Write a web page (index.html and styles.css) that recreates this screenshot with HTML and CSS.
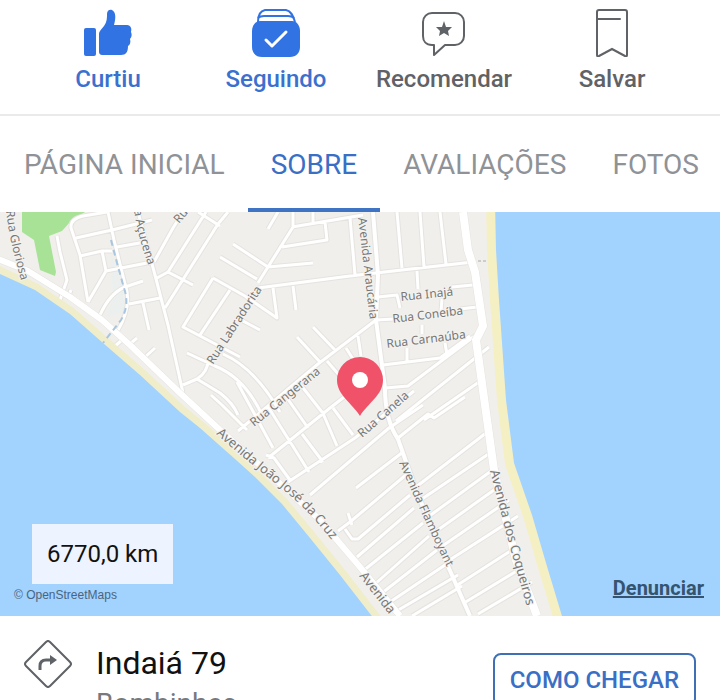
FILE: index.html
```html
<!DOCTYPE html>
<html lang="pt-BR">
<head>
  <meta charset="utf-8">
  <meta name="viewport" content="width=device-width, initial-scale=1">
  <title>Sobre</title>
  <link rel="stylesheet" href="styles.css">
</head>
<body>
  <!-- Page actions -->
  <div class="actions">
    <button type="button" class="action active">
      <svg class="action-icon" viewBox="0 0 48 48">
        <rect x="0" y="19" width="12" height="28" rx="2" fill="currentColor"/>
        <path d="M15 25 C15 22 18 20 20 17 C23 13 23 9 23 5 C23 1 26 0 28 1 C32 3 32 9 30 16 H43 C47 16 48 20 47 23 C48 25 48 28 46 30 C47 33 46 36 44 37 C44 43 42 46 37 46 H19 C16 46 15 45 15 42 Z" fill="currentColor"/>
      </svg>
      Curtiu
    </button>
    <button type="button" class="action active">
      <svg class="action-icon" viewBox="0 0 48 48">
        <path d="M6 13 C6 6 8 2 13 1 H34 C39 2 41 6 43 13" fill="none" stroke="currentColor" stroke-width="2"/>
        <path d="M6 9 C8 7 10 7 12 7 H36 C39 7 40 7 42 9" fill="none" stroke="currentColor" stroke-width="2"/>
        <path d="M8 12 H40 C45 12 48 17 48 22 V38 C48 44 44 48 38 48 H10 C4 48 0 44 0 38 V22 C0 17 3 12 8 12 Z" fill="currentColor"/>
        <path d="M14 31 L20 37 L34 23" fill="none" stroke="#fff" stroke-width="3" stroke-linecap="round" stroke-linejoin="round"/>
      </svg>
      Seguindo
    </button>
    <button type="button" class="action">
      <svg class="action-icon" viewBox="0 0 48 48">
        <path d="M12 4 H35 C40 4 44 8 44 13 V27 C44 32 40 36 35 36 H25 L14 46 V36 H12 C6 36 3 32 3 27 V13 C3 8 7 4 12 4 Z" fill="none" stroke="currentColor" stroke-width="2" stroke-linejoin="round"/>
        <path d="M24 12 L26 18 L32 18 L28 22 L29 27 L24 24 L19 27 L20 22 L16 18 L22 18 Z" fill="currentColor"/>
      </svg>
      Recomendar
    </button>
    <button type="button" class="action">
      <svg class="action-icon" viewBox="0 0 48 48">
        <path d="M11 1 H37 Q39 1 39 3 V46 Q39 48 37 47 L24 40 L11 47 Q9 48 9 46 V3 Q9 1 11 1 Z M9 10 H32" fill="none" stroke="currentColor" stroke-width="2" stroke-linecap="round"/>
      </svg>
      Salvar
    </button>
  </div>

  <!-- Tabs -->
  <nav class="tabs">
    <a href="#inicio" class="tab">PÁGINA INICIAL</a>
    <a href="#sobre" class="tab current">SOBRE</a>
    <a href="#avaliacoes" class="tab">AVALIAÇÕES</a>
    <a href="#fotos" class="tab">FOTOS</a>
  </nav>

  <!-- Map -->
  <div class="map">
    <svg class="map-canvas" viewBox="0 212 720 404">
      <defs>
        <path id="streets" d="M107 212 L83 216 Q70 219 71 228 L80 255 L88 302
          M76 238 L112 230 L152 220 M80 256 L102 251 L112 251 M117 247 L145 242
          M88 302 L106 271 L152 262 M102 251 L106 271
          M100 315 Q110 293 125 287 L143 281
          M57 236 L60 252 L67 280 L60 300 M71 290 L68 298
          M108 212 L114 240 L125 284 Q133 305 117 332
          M129 304 L160 298 M143 303 L149 330
          M138 212 L155 275 L168 325 L183 393
          M154 262 L173 228 L183 212 M157 278 L168 272 L193 285
          M168 272 L206 212 M165 308 L218 224 L228 212 M198 212 L220 226
          M213 278 L183 327 L240 357 M200 335 L230 290 M213 278 L245 296 L277 318 L273 288
          M183 385 L197 379 Q208 372 208 360 M187 353 L215 366 Q245 378 262 415
          M197 379 L220 393 Q233 403 238 415
          M114 347 L122 340 M131 343 L137 338 M144 358 L155 348
          M223 354 Q255 368 280 412
          M293 212 V227 L258 283 M292 227 L363 215 M313 212 V222 M268 229 L278 212
          M282 247 L327 240 L325 222 M233 244 L268 267 L313 263 M220 257 L257 279
          M258 288 L350 276 L402 270 L473 262 M293 286 L296 310 M243 321 L260 330
          M350 218 L355 275 M397 212 L402 268 M420 212 L424 267 M440 212 L446 264
          M417 271 L418 289 M378 297 L397 295 L400 308 M452 287 L473 285
          M376 320 L394 319 M460 309 L477 307 M442 299 L441 311
          M376 320 L318 364 L238 431 M297 337 L320 362 M313 327 L335 350
          M358 336 L361 356 M346 348 L360 370 M327 361 L345 382
          M383 365 L440 358 L470 336 M407 348 L407 361 M422 325 L422 334 M445 343 L447 355
          M385 388 L408 386 L476 335 M396 421 L489 347 M424 420 L479 382
          M268 458 L330 408 L370 377 M288 482 L355 438 L414 391 M310 495 L389 428 L423 405
          M211 395 L222 405 L247 430 M237 382 L273 448 M267 405 L309 472
          M300 384 L322 412 M302 434 L323 462 M322 411 L337 446 M333 408 L353 435
          M285 395 L308 428 M266 455 L274 458 L290 480
          M398 438 L428 414 L434 418 L465 397 M403 452 L356 488
          M338 531 L350 522 L407 474 M348 513 L352 525 M345 529 L352 539 L358 539 L410 495
          M357 557 L414 508 M363 571 L423 523 M375 584 L429 536 M382 593 L437 550
          M390 602 L448 563 M395 612 L458 575 M412 616 L462 586
          M416 487 L486 433 M422 499 L490 453 M428 517 L498 466 M435 532 L501 485
          M441 547 L509 500 M448 561 L518 516 M456 586 L512 550 M464 603 L520 569 M478 614 L532 582"/>
        <path id="avenues" d="M373 212 L378 275 L376 320 L385 388 Q385 420 398 439 L416 490 L440 548 L470 616"/>
        <path id="shore-avenue" d="M-2 259 L28 271 L70 297 L102 320 L130 345 L180 393 L220 430 L285 488 L320 520 L360 567 L400 616"/>
        <path id="beach-avenue" d="M463 212 L468 250 L475 272 L483 326 L476 340 L485 405 L494 470 L516 560 L537 616"/>
        <path id="west-coast" d="M-20 263 L0 274 L35 290 L70 314 L103 343 L140 375 L180 412 L200 428 L235 459 L255 477 L282 504 L310 538 L340 575 L378 624"/>
        <path id="east-coast" d="M495 200 L496 250 L499 300 L506 400 L514 463 L532 515 L546 563 L565 626"/>
        <path id="p-gloriosa" d="M6 211 Q10 245 24 290"/>
        <path id="p-acucena" d="M134 210 Q138 240 152 275"/>
        <path id="p-araucaria" d="M358 218 L363 260 L371 330"/>
        <path id="p-joao" d="M216 434 L250 463 L285 491 Q305 508 320 526 L350 562"/>
        <path id="p-flamboyant" d="M399 463 L420 510 L455 585"/>
        <path id="p-coqueiros" d="M490 471 L506 533 L532 625"/>
      </defs>

      <rect class="land" x="0" y="212" width="720" height="404"/>
      <path class="park" d="M22 212 H85 L70 222 L62 231 L49 236 L56 272 L55 276 L40 270 L34 240 L22 232 Z"/>
      <path class="park-soft" d="M110 250 L123 290 L125 312 L106 317 L113 298 Z"/>

      <use href="#streets" class="street-edge"/>
      <use href="#avenues" class="avenue-edge"/>
      <use href="#streets" class="street"/>
      <use href="#avenues" class="avenue"/>

      <use href="#west-coast" class="sand"/>
      <use href="#east-coast" class="sand east"/>
      <path class="water" d="M-20 263 L0 274 L35 290 L70 314 L103 343 L140 375 L180 412 L200 428 L235 459 L255 477 L282 504 L310 538 L340 575 L378 624 H-20 Z"/>
      <path class="water" d="M495 200 L496 250 L499 300 L506 400 L514 463 L532 515 L546 563 L565 626 H730 V200 Z"/>
      <use href="#shore-avenue" class="shore-edge"/>
      <use href="#shore-avenue" class="shore"/>
      <use href="#beach-avenue" class="beach-edge"/>
      <use href="#beach-avenue" class="beach"/>
      <path class="stream" d="M111 240 L117 263 L124 288 Q130 305 121 320 L103 343"/>
      <path class="path-dots" d="M478 261 H487"/>

      <g class="street-name">
        <text><textPath href="#p-gloriosa">Rua Gloriosa</textPath></text>
        <text><textPath href="#p-acucena">a Açucena</textPath></text>
        <text transform="translate(179 224) rotate(-50)">Rua</text>
        <text transform="translate(213 365) rotate(-57)">Rua Labradorita</text>
        <text><textPath href="#p-araucaria">Avenida Araucária</textPath></text>
        <text transform="translate(401 301) rotate(-6)">Rua Inajá</text>
        <text transform="translate(393 323) rotate(-7)">Rua Coneíba</text>
        <text transform="translate(387 348) rotate(-7)">Rua Carnaúba</text>
        <text transform="translate(254 427) rotate(-39)">Rua Cangerana</text>
        <text transform="translate(362 438) rotate(-41)">Rua Canela</text>
        <text class="main-street"><textPath href="#p-joao">Avenida João José da Cruz</textPath></text>
        <text><textPath href="#p-flamboyant">Avenida Flamboyant</textPath></text>
        <text class="main-street"><textPath href="#p-coqueiros">Avenida dos Coqueiros</textPath></text>
        <text class="main-street" transform="translate(359 576) rotate(52)">Avenida</text>
      </g>

      <path class="pin" d="M360 416 C352 403 337 395 337 380 A23 23 0 0 1 383 380 C383 395 368 403 360 416 Z"/>
      <circle class="pin-hole" cx="360" cy="380" r="8"/>
    </svg>
    <div class="distance">6770,0 km</div>
    <div class="credit">© OpenStreetMaps</div>
    <a href="#denunciar" class="report">Denunciar</a>
  </div>

  <!-- Address -->
  <div class="address">
    <svg class="address-icon" viewBox="0 0 48 48">
      <path d="M22 2 Q24 0 26 2 L46 22 Q48 24 46 26 L26 46 Q24 48 22 46 L2 26 Q0 24 2 22 Z" fill="none" stroke="currentColor" stroke-width="2"/>
      <path d="M16 30 V26 Q16 20 22 20 H28" fill="none" stroke="currentColor" stroke-width="3"/>
      <path d="M26 15 L33 20 L26 25 Z" fill="currentColor"/>
    </svg>
    <div class="address-text">
      <div class="street-line">Indaiá 79</div>
      <div class="city-line">Bombinhas</div>
    </div>
    <button type="button" class="directions">COMO CHEGAR</button>
  </div>
</body>
</html>
```
FILE: styles.css
```css
body {
  margin: 0;
  background: #fff;
  color: #111;
  font-family: Roboto, sans-serif;
  overflow-x: hidden;
}
button {
  background: none;
  border: none;
  padding: 0;
  font-family: inherit;
}

/* actions */
.actions {
  display: grid;
  grid-template-columns: repeat(4, 1fr);
  padding: 9px 24px 21px;
  border-bottom: 2px solid #e9eaec;
}
.action {
  display: flex;
  flex-direction: column;
  align-items: center;
  gap: 8px;
  color: #5f6266;
  font-size: 24px;
  font-weight: 500;
  line-height: 28px;
}
.action-icon {
  width: 48px;
  height: 48px;
}
.action.active {
  color: #3b70cf;
}
.action.active .action-icon {
  color: #3273e3;
}

/* tabs */
.tabs {
  display: flex;
  padding: 0 1px;
  overflow: hidden;
}
.tab {
  flex: none;
  padding: 6px 23px 0;
  border-bottom: 4px solid transparent;
  color: #8f9296;
  font-size: 28px;
  line-height: 86px;
  text-decoration: none;
}
.tab.current {
  color: #3a6fc6;
  border-bottom-color: #3f74c4;
}

/* map */
.map {
  position: relative;
}
.map-canvas {
  display: block;
  width: 100%;
}
.land {
  fill: #f0efec;
}
.park {
  fill: #a8e297;
}
.park-soft {
  fill: #ebf0ef;
}
.water {
  fill: #a2d2fe;
}
.sand {
  fill: none;
  stroke: #f0edcb;
  stroke-width: 14;
}
.sand.east {
  stroke: #f5efc4;
  stroke-width: 18;
}
.street, .street-edge, .avenue, .avenue-edge, .shore, .shore-edge, .beach, .beach-edge {
  fill: none;
  stroke: #fff;
  stroke-linejoin: round;
}
.street {
  stroke-width: 3;
}
.avenue {
  stroke-width: 4;
}
.shore {
  stroke-width: 6;
}
.beach {
  stroke-width: 8;
}
.street-edge, .avenue-edge, .shore-edge, .beach-edge {
  stroke: #e5e3df;
}
.street-edge {
  stroke-width: 5;
}
.avenue-edge {
  stroke-width: 6;
}
.shore-edge {
  stroke-width: 7;
}
.beach-edge {
  stroke-width: 9;
}
.stream {
  fill: none;
  stroke: #a9c6e0;
  stroke-width: 2;
  stroke-dasharray: 6 4;
}
.path-dots {
  stroke: #aaa;
  stroke-dasharray: 3 2;
}
.street-name text {
  fill: #777;
  stroke: #f4f3f0;
  stroke-width: 2;
  paint-order: stroke;
  font-family: "Noto Sans", sans-serif;
  font-size: 12px;
}
.street-name .main-street {
  font-size: 13px;
}
.pin {
  fill: #f0526a;
}
.pin-hole {
  fill: #fff;
}
.distance {
  position: absolute;
  left: 32px;
  bottom: 32px;
  padding: 0 15px;
  background: #edf4ff;
  font-size: 24px;
  line-height: 60px;
}
.credit {
  position: absolute;
  left: 14px;
  bottom: 13px;
  color: #4a6580;
  font-family: "Liberation Sans", Arial, sans-serif;
  font-size: 12px;
  line-height: 16px;
}
.report {
  position: absolute;
  right: 16px;
  bottom: 16px;
  color: #34546f;
  font-size: 20px;
  font-weight: 700;
  line-height: 24px;
}

/* address */
.address {
  display: flex;
  align-items: flex-start;
  gap: 24px;
  padding: 24px;
}
.address-icon {
  flex: none;
  width: 48px;
  height: 48px;
  color: #5f6266;
}
.address-text {
  flex: 1;
}
.street-line {
  font-size: 32px;
  line-height: 46px;
}
.city-line {
  color: #77797d;
  font-size: 28px;
  line-height: 36px;
}
.directions {
  margin-top: 13px;
  padding: 0 15px;
  border: 2px solid #3f6fb5;
  border-radius: 8px;
  color: #3a6fc6;
  font-size: 24px;
  font-weight: 500;
  line-height: 50px;
}
```
